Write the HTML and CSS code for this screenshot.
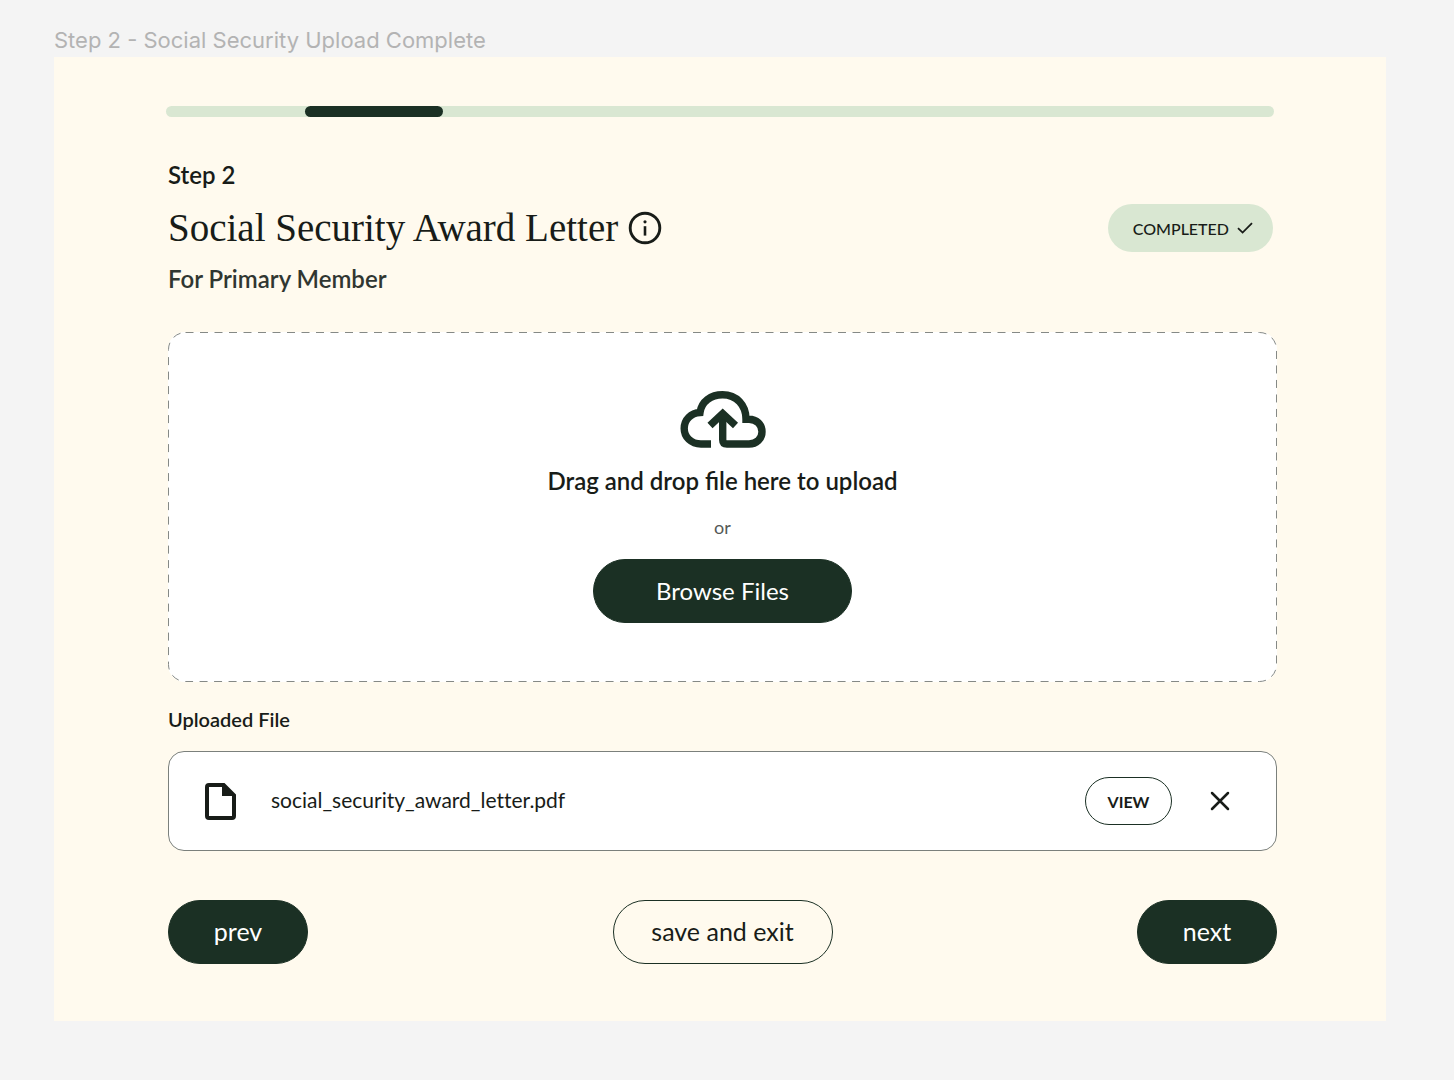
FILE: index.html
```html
<!DOCTYPE html>
<html lang="en">
<head>
<meta charset="utf-8">
<meta name="viewport" content="width=device-width, initial-scale=1">
<title>Step 2 - Social Security Upload Complete</title>
<link rel="stylesheet" href="styles.css">
</head>
<body>
<p class="frame-label">Step 2 - Social Security Upload Complete</p>
<main class="frame">
  <div class="progress" role="progressbar" aria-label="Step 2 of 8" aria-valuemin="1" aria-valuemax="8" aria-valuenow="2">
    <div class="progress-step"></div>
  </div>
  <div class="content">
    <header class="intro">
      <p class="step">Step 2</p>
      <div class="title-row">
        <h1 class="title">Social Security Award Letter</h1>
        <button class="icon-button" type="button" aria-label="More information">
          <svg width="34" height="34" viewBox="0 0 34 34" fill="none" stroke="currentColor">
            <circle cx="17" cy="17" r="14.8" stroke-width="2.9"/>
            <path d="M17 15.2V24.6" stroke-width="2.6"/>
            <circle cx="17" cy="10.8" r="1.6" fill="currentColor" stroke="none"/>
          </svg>
        </button>
        <span class="badge">COMPLETED
          <svg width="16" height="12" viewBox="0 0 16 12" fill="none" stroke="currentColor" stroke-width="1.8"><path d="M1 6.2L5.6 10.6L15 1.2"/></svg>
        </span>
      </div>
      <p class="subtitle">For Primary Member</p>
    </header>

    <section class="dropzone">
      <svg class="dropzone-outline" aria-hidden="true"><rect x="0.5" y="0.5" rx="17" /></svg>
      <svg class="cloud" width="86" height="57" viewBox="0 0 86 57" fill="none" stroke="currentColor" stroke-width="7.4">
        <path d="M31 53H21C11 53 4.2 46 4.2 37.5C4.2 28.5 11 22 20 21.5C21.5 10.5 31 3.8 42.5 3.8C56.5 3.8 66 14 66 28.2H69C76.5 28.2 82 33.5 82 40.7C82 47.8 76.5 53 69 53H47Q42.7 53 42.7 48.7V24"/>
        <path d="M30 34.5L42.7 22.5L55.5 34.5"/>
      </svg>
      <p class="drop-text">Drag and drop file here to upload</p>
      <p class="or">or</p>
      <button class="button button-solid button-wide" type="button">Browse Files</button>
    </section>

    <section>
      <h2 class="files-title">Uploaded File</h2>
      <div class="file">
        <svg class="file-icon" width="31" height="37" viewBox="0 0 31 37"><path fill="currentColor" fill-rule="evenodd" d="M4 0H19.5L31 11.5V33Q31 37 27 37H4Q0 37 0 33V4Q0 0 4 0ZM4 4V33H27V13H17V4Z"/></svg>
        <span class="file-name">social_security_award_letter.pdf</span>
        <button class="button-view" type="button">VIEW</button>
        <button class="icon-button" type="button" aria-label="Remove file">
          <svg width="20" height="20" viewBox="0 0 20 20" fill="none" stroke="currentColor" stroke-width="2.5" stroke-linecap="round"><path d="M2 2L18 18M18 2L2 18"/></svg>
        </button>
      </div>
    </section>

    <nav class="actions">
      <button class="button button-solid button-nav" type="button">prev</button>
      <button class="button button-outline" type="button">save and exit</button>
      <button class="button button-solid button-nav" type="button">next</button>
    </nav>
  </div>
</main>
</body>
</html>
```
FILE: styles.css
```css
* { box-sizing: border-box; }

body {
  margin: 0;
  padding: 24px 68px 56px 54px;
  background: #f4f4f4;
  color: #181c18;
  font-family: Lato, "Liberation Sans", sans-serif;
}

p, h1, h2 { margin: 0; }

button {
  font-family: inherit;
  color: inherit;
  cursor: pointer;
}

svg { display: block; flex: none; }

.frame-label {
  font: 400 22px/33px Inter, sans-serif;
  color: #b3b3b3;
}

.frame {
  padding: 49px 0 57px;
  background: #fffaee;
}

.progress {
  height: 11px;
  margin: 0 112px;
  border-radius: 6px;
  background: #d9e7d2;
}

.progress-step {
  width: 12.5%;
  height: 100%;
  margin-left: 12.5%;
  border-radius: 6px;
  background: #1b3024;
}

.content { padding: 44px 109px 0 114px; }

.step {
  font-size: 24px;
  font-weight: 600;
  line-height: 28px;
}

.title-row {
  display: flex;
  align-items: center;
  height: 48px;
  margin: 15px 4px 11px 0;
}

.title {
  margin-right: 10px;
  font: 400 39px/48px "Liberation Serif", serif;
}

.icon-button {
  padding: 0;
  border: 0;
  background: none;
}

.badge {
  display: flex;
  align-items: center;
  gap: 8px;
  height: 48px;
  margin-left: auto;
  padding: 0 20px 0 25px;
  border-radius: 24px;
  background: #d9e7d2;
  font-size: 16px;
  font-weight: 500;
}

.subtitle {
  color: #303631;
  font-size: 24px;
  font-weight: 600;
  line-height: 32px;
}

.dropzone {
  position: relative;
  display: flex;
  flex-direction: column;
  align-items: center;
  margin: 37px 0 25px;
  padding: 59px 0;
  border-radius: 17px;
  background: #fff;
}

.dropzone-outline {
  position: absolute;
  inset: 0;
  width: 100%;
  height: 100%;
}

.dropzone-outline rect {
  width: calc(100% - 1px);
  height: calc(100% - 1px);
  fill: none;
  stroke: #858986;
  stroke-dasharray: 8 6.5;
}

.cloud { color: #1b3024; }

.drop-text {
  margin: 18px 0 19px;
  font-size: 24px;
  font-weight: 600;
  line-height: 30px;
}

.or {
  margin-bottom: 20px;
  color: #555956;
  font-size: 18px;
  line-height: 24px;
}

.button {
  height: 64px;
  padding-bottom: 3px;
  border: 1px solid #1b3024;
  border-radius: 32px;
  font-size: 24px;
}

.button-solid {
  background: #1b3024;
  color: #fff;
}

.button-wide {
  position: relative;
  width: 259px;
}

.button-nav { width: 140px; }

.button-outline {
  width: 220px;
  background: none;
}

.actions .button { font-size: 25px; }

.files-title {
  font-size: 20px;
  font-weight: 600;
  line-height: 24px;
}

.file {
  display: flex;
  align-items: center;
  height: 100px;
  margin-top: 20px;
  padding: 0 46px 0 36px;
  border: 1px solid #7b807c;
  border-radius: 16px;
  background: #fff;
}

.file-name {
  flex: 1;
  margin-left: 35px;
  padding-bottom: 3px;
  font-size: 21px;
  font-variant-ligatures: none;
}

.button-view {
  width: 87px;
  height: 48px;
  margin-right: 38px;
  border: 1px solid #1b3024;
  border-radius: 24px;
  background: none;
  font-size: 16px;
  font-weight: 700;
}

.actions {
  display: flex;
  justify-content: space-between;
  margin-top: 49px;
}
```
